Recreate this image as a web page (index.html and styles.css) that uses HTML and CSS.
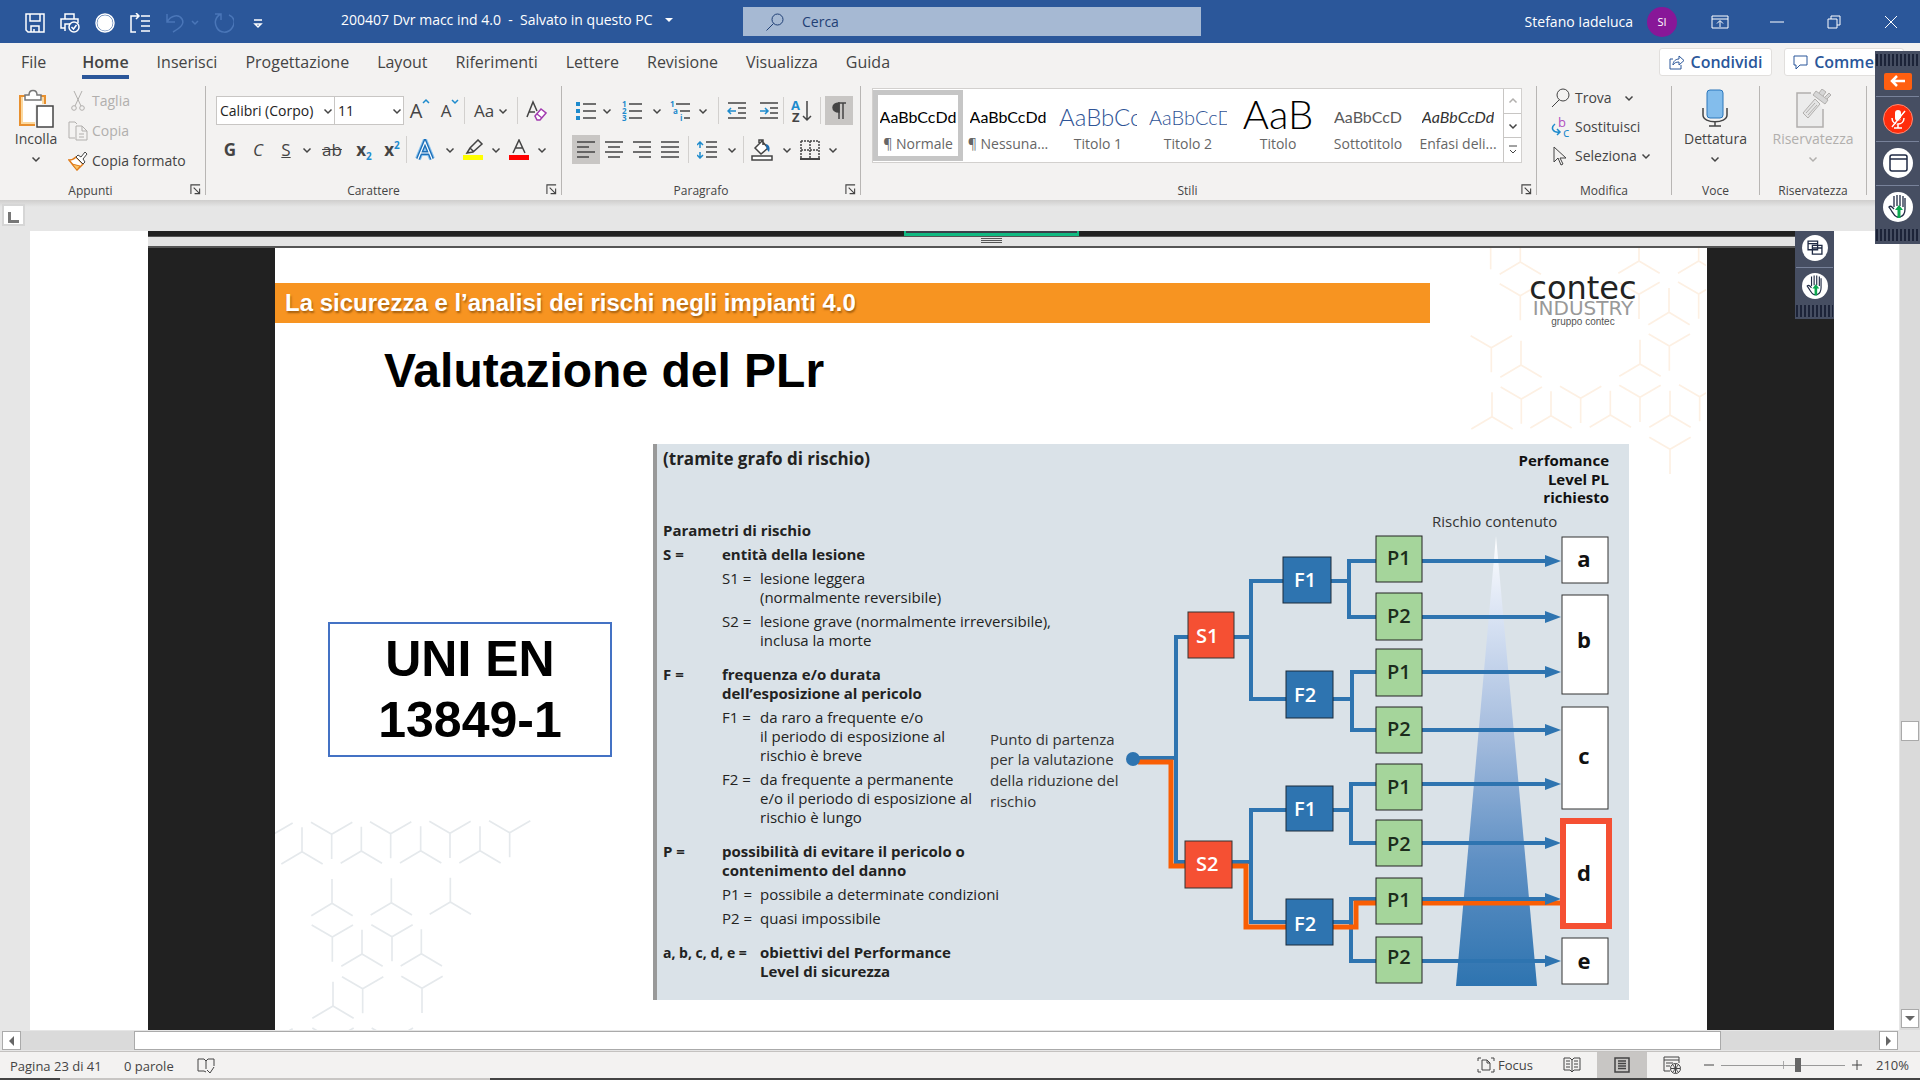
FILE: index.html
```html
<!DOCTYPE html>
<html lang="it">
<head>
<meta charset="utf-8">
<title>200407 Dvr macc ind 4.0</title>
<link rel="stylesheet" href="styles.css">
</head>
<body>
<svg class="sprite" aria-hidden="true">
  <symbol id="chev" viewBox="0 0 10 10"><path d="M1.500 3.500 5 7l3.500-3.500" fill="none" stroke="currentColor" stroke-width="1.500"/></symbol>
  <symbol id="launch" viewBox="0 0 12 12"><path d="M1 11V1h10M4 4l6 6M10.500 5v5.500H5" fill="none" stroke="currentColor" stroke-width="1.200"/></symbol>
  <symbol id="hand" viewBox="0 0 30 30"><circle cx="15" cy="15" r="15" fill="#fff"/><path d="M11 15V4M14 14V3M17 14V3M20 15V4M22 6v11c0 4-2 7-5 8h-3c-3-1-4-4-6-7l-2-3c1-1 2-1 3 0l2 2" fill="none" stroke="#1f2a44" stroke-width="1.300"/><path d="m16 13 4 5h-2.500v8h-3v-8H12z" fill="#0ba84e"/></symbol>
  <g id="pk"><path d="M0-73V0M-62 37 0 0 62 37"/></g>
  <g id="ve"><path d="M0 74V0M-62-36 0 0 62-36"/></g>
</svg>

<header class="titlebar">
  <div class="quick">
    <button aria-label="Salva"><svg width="20" height="20" viewBox="0 0 20 20"><path d="M1 1h18v18H3l-2-2zM5 1v7h10V1M6 19v-6h8v6M9 16v3"/></svg></button>
    <button aria-label="Stampa"><svg width="20" height="20" viewBox="0 0 20 20"><path d="M5 6V1h9v5M5 15H1V6h17v4M5 18V11h5"/><circle cx="14" cy="14" r="5"/><path d="m11.500 14 2 2 3-4"/></svg></button>
    <button aria-label="Registra"><svg width="20" height="20" viewBox="0 0 20 20"><circle cx="10" cy="10" r="9"/><circle cx="10" cy="10" r="7" fill="#fff"/></svg></button>
    <button aria-label="Spaziatura"><svg width="20" height="20" viewBox="0 0 20 20"><path d="M6 19H1V3h7M6 0l3 3-3 3M11 3h9M11 8h9M11 13h9M11 18h9"/></svg></button>
    <button class="dim" aria-label="Annulla"><svg width="34" height="20" viewBox="0 0 34 20"><path d="M2 1v8h8M2 9C6 2 14 1 17 6s-2 9-9 13M27 8l3 3 3-3"/></svg></button>
    <button class="dim" aria-label="Ripeti"><svg width="20" height="20" viewBox="0 0 20 20"><path d="M1 1h6v6M7 1C1 4 0 10 3 15s11 6 15 0 2-11-3-13"/></svg></button>
    <button aria-label="Personalizza"><svg width="10" height="20" viewBox="0 0 10 20"><path d="M1 7h8M2 11l3 3 3-3z"/></svg></button>
  </div>
  <div class="doctitle">200407 Dvr macc ind 4.0&nbsp; -&nbsp; Salvato in questo PC <i class="tri"></i></div>
  <label class="search"><svg width="18" height="18" viewBox="0 0 18 18"><circle cx="11.500" cy="6.500" r="5.500"/><path d="m7.500 10.500-7 7"/></svg><input type="text" placeholder="Cerca" aria-label="Cerca"></label>
  <div class="account"><span>Stefano Iadeluca</span><span class="avatar">SI</span></div>
  <div class="winbtns">
    <button aria-label="Opzioni barra"><svg width="18" height="14" viewBox="0 0 18 14"><path d="M1 1h16v12H1zM1 4h16M9 12V6M6 8.500l3-3 3 3"/></svg></button>
    <button aria-label="Riduci"><svg width="14" height="14" viewBox="0 0 14 14"><path d="M0 7h14"/></svg></button>
    <button aria-label="Ripristina"><svg width="14" height="14" viewBox="0 0 14 14"><path d="M1 4h9v9H1zM4 4V1h9v9h-3"/></svg></button>
    <button aria-label="Chiudi"><svg width="14" height="14" viewBox="0 0 14 14"><path d="m1 1 12 12M13 1 1 13"/></svg></button>
  </div>
</header>

<nav class="tabs">
  <a href="#">File</a><a href="#" class="on">Home</a><a href="#">Inserisci</a><a href="#">Progettazione</a><a href="#">Layout</a><a href="#">Riferimenti</a><a href="#">Lettere</a><a href="#">Revisione</a><a href="#">Visualizza</a><a href="#">Guida</a>
  <div class="share">
    <button class="condividi"><svg width="16" height="16" viewBox="0 0 16 16"><path d="M4 5H1v10h11v-4M4 11c0-4 3-6 6-6V2l5 4.500L10 11V8c-3 0-5 1-6 3z"/></svg>Condividi</button>
    <button class="commenti"><svg width="15" height="15" viewBox="0 0 15 15"><path d="M1 1h13v9H7l-4 4v-4H1z"/></svg>Commenti</button>
  </div>
</nav>

<section class="ribbon">
  <div class="group clip">
    <div class="body">
      <button class="big"><svg width="36" height="40" viewBox="0 0 36 40"><path d="M2 7h25v29H2z" fill="#fff" stroke="#e8902f" stroke-width="2"/><path d="M4 8v26h21V8" stroke="#fbd9a0" stroke-width="2"/><path d="M7 11V6h4c0-6 8-6 8 0h4v5z" fill="#fff" stroke="#777" stroke-width="1.500"/><path d="M17 15h18v24H17z" fill="#f3f2f1" stroke="none"/><path d="M19 17h16v21H19z" fill="#fff" stroke="#444" stroke-width="1.500"/></svg>Incolla<svg class="cv"><use href="#chev"/></svg></button>
      <div class="stack">
        <button class="off"><svg width="20" height="20" viewBox="0 0 20 20"><path d="M6 0l7 15M14 0 7 15"/><circle cx="6" cy="17" r="2.300"/><circle cx="14" cy="17" r="2.300"/></svg>Taglia</button>
        <button class="off"><svg width="20" height="20" viewBox="0 0 20 20"><path d="M7 17H1V1h6l2 2M8 5h6l5 5v9H8zM14 5v5h5M11 13h5M11 16h5"/></svg>Copia</button>
        <button><svg width="20" height="20" viewBox="0 0 20 20"><path d="M1 9c3 0 5-1 7-3l7 7c-2 2-4 4-6 6z" fill="#fff" stroke="#e07b1a" stroke-width="1.500"/><path d="m4 13 8 2-3 4z" fill="#fbc66a" stroke="#e07b1a"/><path d="m8 6 2-2 3 2 4-5 2 2-4 5 2 3-2 2z" fill="#fff"/></svg>Copia formato</button>
      </div>
    </div>
    <footer>Appunti<button aria-label="Apri Appunti"><svg><use href="#launch"/></svg></button></footer>
  </div>

  <div class="group font">
    <div class="body rows">
      <div class="row">
        <span class="combo c1"><select aria-label="Tipo di carattere"><option>Calibri (Corpo)</option></select><svg class="cv"><use href="#chev"/></svg></span><span class="combo c2"><select aria-label="Dimensione"><option>11</option></select><svg class="cv"><use href="#chev"/></svg></span>
        <button class="b32 cap">A<svg width="8" height="12" viewBox="0 0 8 12"><path d="m1 5 3-3 3 3" stroke="#1e8bcd" stroke-width="1.500"/></svg></button>
        <button class="b28 cap sm">A<svg width="8" height="12" viewBox="0 0 8 12"><path d="m1 2 3 3 3-3" stroke="#1e8bcd" stroke-width="1.500"/></svg></button>
        <i class="sep"></i>
        <button class="b52 aa">Aa<svg class="cv"><use href="#chev"/></svg></button>
        <i class="sep"></i>
        <button class="b36" aria-label="Cancella formattazione"><svg width="22" height="22" viewBox="0 0 22 22"><path d="M2 17 8 2l4 9M4 12h6"/><path d="m10 16 6-7 5 4-6 7h-3z" fill="#fff" stroke="#a33bb0" stroke-width="1.500"/><path d="m12 14 5 4" stroke="#a33bb0"/></svg></button>
      </div>
      <div class="row">
        <button class="b28"><b>G</b></button><button class="b28"><em>C</em></button><button class="b28"><u>S</u></button><button class="b14"><svg class="cv"><use href="#chev"/></svg></button>
        <button class="b36"><s>ab</s></button><button class="b28"><b>x<sub>2</sub></b></button><button class="b28"><b>x<sup>2</sup></b></button>
        <i class="sep"></i>
        <button class="b36" aria-label="Effetti testo"><svg width="22" height="22" viewBox="0 0 22 22"><path d="M4 20 11 3l7 17M7 14h8" stroke="#8cc4ef" stroke-width="6"/><path d="M4 20 11 3l7 17M7 14h8" stroke="#1d6fb8" stroke-width="4"/><path d="M4 20 11 3l7 17M7 14h8" stroke="#fff" stroke-width="1.200"/></svg></button><button class="b14"><svg class="cv"><use href="#chev"/></svg></button>
        <button class="b32" aria-label="Evidenziatore"><svg width="22" height="22" viewBox="0 0 22 22"><path d="M5 14 8 9l8-8 4 4-9 8zM8 9l4 4"/><path d="M1 16h20v5H1z" fill="#ff0" stroke="none"/></svg></button><button class="b14"><svg class="cv"><use href="#chev"/></svg></button>
        <button class="b32" aria-label="Colore carattere"><svg width="22" height="22" viewBox="0 0 22 22"><path d="M5 14 11 1l6 13M7 9h8"/><path d="M1 16h20v5H1z" fill="#f00" stroke="none"/></svg></button><button class="b14"><svg class="cv"><use href="#chev"/></svg></button>
      </div>
    </div>
    <footer>Carattere<button aria-label="Apri Carattere"><svg><use href="#launch"/></svg></button></footer>
  </div>

  <div class="group para">
    <div class="body rows">
      <div class="row">
        <button class="b28" aria-label="Elenco puntato"><svg width="20" height="20" viewBox="0 0 20 20"><path d="M0 1h4v4H0zM0 8h4v4H0zM0 15h4v4H0z" fill="#1e8bcd" stroke="none"/><path d="M7 3h13M7 10h13M7 17h13"/></svg></button><button class="b14"><svg class="cv"><use href="#chev"/></svg></button>
        <button class="b36" aria-label="Elenco numerato"><svg class="num" width="20" height="20" viewBox="0 0 20 20"><text x="0" y="6">1</text><text x="0" y="13">2</text><text x="0" y="20">3</text><path d="M7 3h13M7 10h13M7 17h13"/></svg></button><button class="b14"><svg class="cv"><use href="#chev"/></svg></button>
        <button class="b32" aria-label="Elenco a più livelli"><svg class="num" width="20" height="20" viewBox="0 0 20 20"><text x="0" y="6">1</text><text x="3" y="13">a</text><text x="10" y="20">i</text><path d="M6 3h14M10 10h10M14 17h6"/></svg></button><button class="b14"><svg class="cv"><use href="#chev"/></svg></button>
        <i class="sep l8"></i>
        <button class="b36" aria-label="Riduci rientro"><svg width="20" height="18" viewBox="0 0 20 18"><path d="M1 1h18M11 6h8M11 11h8M1 16h18"/><path d="M9 9H1M4 6 1 9l3 3" stroke="#1e8bcd" stroke-width="1.500"/></svg></button><button class="b28" aria-label="Aumenta rientro"><svg width="20" height="18" viewBox="0 0 20 18"><path d="M1 1h18M11 6h8M11 11h8M1 16h18"/><path d="M1 9h8M6 6l3 3-3 3" stroke="#1e8bcd" stroke-width="1.500"/></svg></button>
        <i class="sep"></i>
        <button class="b36" aria-label="Ordina"><svg class="sort" width="22" height="22" viewBox="0 0 22 22"><text x="0" y="10" class="bl">A</text><text x="1" y="22">Z</text><path d="M16 1v19M12 16l4 4 4-4"/></svg></button>
        <i class="sep"></i>
        <button class="b28 sel l4" aria-label="Mostra tutto"><svg width="14" height="18" viewBox="0 0 14 18"><path d="M7 17V1M11 17V1M14 1H6"/><path d="M7 1C-1 1-1 10 7 10z" fill="#444"/></svg></button>
      </div>
      <div class="row">
        <button class="b28 sel" aria-label="Allinea a sinistra"><svg width="20" height="18" viewBox="0 0 20 18"><path d="M1 1h18M1 6h12M1 11h18M1 16h12"/></svg></button><button class="b28" aria-label="Centra"><svg width="20" height="18" viewBox="0 0 20 18"><path d="M1 1h18M4 6h12M1 11h18M4 16h12"/></svg></button><button class="b28" aria-label="Allinea a destra"><svg width="20" height="18" viewBox="0 0 20 18"><path d="M1 1h18M7 6h12M1 11h18M7 16h12"/></svg></button><button class="b28" aria-label="Giustifica"><svg width="20" height="18" viewBox="0 0 20 18"><path d="M1 1h18M1 6h18M1 11h18M1 16h18"/></svg></button>
        <i class="sep l4"></i>
        <button class="b36" aria-label="Interlinea"><svg width="20" height="18" viewBox="0 0 20 18"><path d="M9 1h11M9 6h11M9 11h11M9 16h11"/><path d="M3 7V1M0 4l3-3 3 3M3 11v6M0 14l3 3 3-3" stroke="#1e8bcd" stroke-width="1.500"/></svg></button><button class="b14"><svg class="cv"><use href="#chev"/></svg></button>
        <i class="sep l4"></i>
        <button class="b36" aria-label="Sfondo"><svg width="22" height="22" viewBox="0 0 22 22"><path d="m4 9 7-7 6 7-7 6zM8 4V1h4v5" fill="#fff"/><path d="M15 5c4 1 4 5 3 8-2-2-3-4-3-8z" fill="#1e6cb0" stroke="none"/><path d="M1 17h20v4H1z" fill="#fff"/></svg></button><button class="b14"><svg class="cv"><use href="#chev"/></svg></button>
        <button class="b32" aria-label="Bordi"><svg width="20" height="20" viewBox="0 0 20 20"><path d="M1 1h18M1 10h18M1 1v17M10 1v17M19 1v17" stroke-dasharray="2 1"/><path d="M0 19h20" stroke-width="2"/></svg></button><button class="b14"><svg class="cv"><use href="#chev"/></svg></button>
      </div>
    </div>
    <footer>Paragrafo<button aria-label="Apri Paragrafo"><svg><use href="#launch"/></svg></button></footer>
  </div>

  <div class="group styles">
    <div class="body">
      <div class="gallery">
        <button class="style cur"><span class="smp">AaBbCcDd</span><span>¶ Normale</span></button>
        <button class="style"><span class="smp">AaBbCcDd</span><span>¶ Nessuna...</span></button>
        <button class="style"><span class="smp t1">AaBbCc</span><span>Titolo 1</span></button>
        <button class="style"><span class="smp t2">AaBbCcD</span><span>Titolo 2</span></button>
        <button class="style"><span class="smp t0">AaB</span><span>Titolo</span></button>
        <button class="style"><span class="smp st">AaBbCcD</span><span>Sottotitolo</span></button>
        <button class="style"><span class="smp en">AaBbCcDd</span><span>Enfasi deli...</span></button>
        <div class="spin"><button class="off" aria-label="Su"><svg class="cv up"><use href="#chev"/></svg></button><button aria-label="Giù"><svg class="cv"><use href="#chev"/></svg></button><button aria-label="Altro"><svg width="10" height="10" viewBox="0 0 10 10"><path d="M1 1h8M2 5l3 3 3-3"/></svg></button></div>
      </div>
    </div>
    <footer>Stili<button aria-label="Apri Stili"><svg><use href="#launch"/></svg></button></footer>
  </div>

  <div class="group modif">
    <div class="body">
      <div class="stack">
        <button><svg width="20" height="20" viewBox="0 0 20 20"><circle cx="12" cy="7" r="6"/><path d="m8 12-7 7"/></svg>Trova<svg class="cv gap"><use href="#chev"/></svg></button>
        <button><svg class="repl" width="20" height="20" viewBox="0 0 20 20"><text x="7" y="10" fill="#b14fc0">b</text><text x="12" y="20" fill="#1e8bcd">c</text><path d="M4 7c-5 4-2 9 5 8M6 12l3 3-3 3" stroke="#1e8bcd" stroke-width="1.500"/></svg>Sostituisci</button>
        <button><svg width="20" height="20" viewBox="0 0 20 20"><path d="M3 1v15l4-4 3 7 2-1-3-6h6z"/></svg>Seleziona<svg class="cv"><use href="#chev"/></svg></button>
      </div>
    </div>
    <footer>Modifica</footer>
  </div>
  <div class="group voce">
    <div class="body"><button class="big"><svg width="28" height="40" viewBox="0 0 28 40"><rect x="6" y="1" width="16" height="28" rx="3" fill="#83bdec" stroke="#2b76bb"/><path d="M2 19v7c0 9 24 9 24 0v-7M14 33v4M8 37h12" stroke-width="1.500"/></svg>Dettatura<svg class="cv"><use href="#chev"/></svg></button></div>
    <footer>Voce</footer>
  </div>
  <div class="group ris">
    <div class="body"><button class="big off"><svg width="36" height="40" viewBox="0 0 36 40"><path d="M16 4H2v34h26V20" fill="#ececec" stroke-width="1.500"/><path d="M8 24 20 10l5 5-12 14zM11 24l9-10M13 26l9-10" fill="#e4e4e4"/><path d="m18 6 3-4 12 9-3 4zM24 4l3-4 4 3-3 4M30 8l4-4 2 2-4 4" fill="#d6d6d6"/></svg>Riservatezza<svg class="cv"><use href="#chev"/></svg></button></div>
    <footer>Riservatezza</footer>
  </div>
</section>

<div class="ruler"><button aria-label="Tabulazione"></button></div>

<main class="work">
  <div class="view">
    <div class="picture">
      <div class="prev"><i></i></div>
      <div class="divider"><i></i></div>
      <article class="slide">
        <svg class="pattern" width="1431" height="782" viewBox="0 0 1431 782" fill="none" aria-hidden="true">
          <g transform="translate(1145 -18) scale(.33333)" stroke="#fdf0e3" stroke-width="5">
            <path d="M212 54v64"/>
            <use href="#pk" x="301" y="96"/><use href="#pk" x="657" y="93"/><use href="#pk" x="836" y="93"/><use href="#pk" x="747" y="247"/><use href="#pk" x="303" y="405"/><use href="#pk" x="660" y="402"/><use href="#pk" x="216" y="560"/><use href="#pk" x="393" y="557"/><use href="#pk" x="571" y="555"/><use href="#pk" x="750" y="555"/>
            <use href="#ve" x="301" y="197"/><use href="#ve" x="657" y="193"/><use href="#ve" x="836" y="192"/><use href="#ve" x="214" y="353"/><use href="#ve" x="748" y="348"/><use href="#ve" x="304" y="507"/><use href="#ve" x="482" y="505"/><use href="#ve" x="660" y="502"/><use href="#ve" x="839" y="500"/><use href="#ve" x="750" y="658"/>
          </g>
          <g transform="translate(-15 542) scale(.33333)" stroke="#e5e9ec" stroke-width="5">
            <use href="#ve" x="36" y="135"/><use href="#ve" x="215" y="133"/><use href="#ve" x="392" y="131"/><use href="#ve" x="570" y="130"/><use href="#ve" x="749" y="128"/><use href="#ve" x="217" y="441"/><use href="#ve" x="396" y="440"/><use href="#ve" x="308" y="596"/><use href="#ve" x="486" y="595"/><use href="#ve" x="36" y="752"/><use href="#ve" x="219" y="750"/><use href="#ve" x="397" y="750"/>
            <use href="#pk" x="126" y="185"/><use href="#pk" x="304" y="183"/><use href="#pk" x="482" y="182"/><use href="#pk" x="660" y="182"/><use href="#pk" x="216" y="340"/><use href="#pk" x="394" y="338"/><use href="#pk" x="571" y="336"/><use href="#pk" x="306" y="492"/><use href="#pk" x="484" y="491"/><use href="#pk" x="219" y="648"/>
          </g>
        </svg>
        <div class="banner">La sicurezza e l’analisi dei rischi negli impianti 4.0</div>
        <div class="logo"><span class="l1">contec</span><span class="l2">INDUSTRY</span><span class="l3">gruppo contec</span></div>
        <h1>Valutazione del PLr</h1>
        <div class="content">
          <div class="norm">UNI EN<br>13849-1</div>
          <div class="panel">
            <div class="params">
              <h2>(tramite grafo di rischio)</h2>
              <h3>Parametri di rischio</h3>
              <dl><dt>S =</dt><dd><b>entità della lesione</b></dd></dl>
              <dl class="sub"><dt>S1 =</dt><dd>lesione leggera<br>(normalmente reversibile)</dd></dl>
              <dl class="sub"><dt>S2 =</dt><dd>lesione grave (normalmente irreversibile),<br>inclusa la morte</dd></dl>
              <dl class="top"><dt>F =</dt><dd><b>frequenza e/o durata<br>dell’esposizione al pericolo</b></dd></dl>
              <dl class="sub"><dt>F1 =</dt><dd>da raro a frequente e/o<br>il periodo di esposizione al<br>rischio è breve</dd></dl>
              <dl class="sub"><dt>F2 =</dt><dd>da frequente a permanente<br>e/o il periodo di esposizione al<br>rischio è lungo</dd></dl>
              <dl class="top"><dt>P =</dt><dd><b>possibilità di evitare il pericolo o<br>contenimento del danno</b></dd></dl>
              <dl class="sub"><dt>P1 =</dt><dd>possibile a determinate condizioni</dd></dl>
              <dl class="sub"><dt>P2 =</dt><dd>quasi impossibile</dd></dl>
              <dl class="top obj"><dt>a, b, c, d, e =</dt><dd><b>obiettivi del Performance<br>Level di sicurezza</b></dd></dl>
            </div>
            <svg class="graph" width="976" height="556" viewBox="0 0 976 556">
              <defs>
                <linearGradient id="cone" x1="0" y1="0" x2="0" y2="1"><stop offset="0" stop-color="#fff"/><stop offset=".2" stop-color="#d5e0f2"/><stop offset=".45" stop-color="#a3bbdd"/><stop offset=".72" stop-color="#5f90c4"/><stop offset="1" stop-color="#2e74b0"/></linearGradient>
                <g id="ar"><path d="M769 0h130" /><path d="M892-6 908 0 892 6z" fill="#2e74b0" stroke="none"/></g>
              </defs>
              <path d="M843 92 884 542H803z" fill="url(#cone)"/>
              <g fill="none" stroke="#2e74b0" stroke-width="4">
                <path d="M480 314h43M535 193h-12v225h10M581 193h17M630 137h-32v118h35M678 137h18M723 117h-27v56h27M680 255h19M723 228h-24v58h24M579 418h19M633 366h-35v112h35M680 366h18M723 340h-25v59h25M680 478h18M723 455h-25v62h25"/>
                <use href="#ar" y="117"/><use href="#ar" y="173"/><use href="#ar" y="228"/><use href="#ar" y="286"/><use href="#ar" y="340"/><use href="#ar" y="399"/><use href="#ar" y="517"/>
              </g>
              <path d="M485 318h33v104h16M579 422h14v61h40M680 483h23v-24h20M769 459h140" fill="none" stroke="#f95e04" stroke-width="5"/>
              <g fill="none" stroke="#2e74b0" stroke-width="4"><use href="#ar" y="455"/></g>
              <circle cx="480" cy="315" r="7" fill="#2e74b0"/>
              <g class="s"><rect x="535" y="168" width="46" height="46"/><rect x="532" y="397" width="47" height="47"/></g>
              <g class="f"><rect x="630" y="113" width="48" height="46"/><rect x="633" y="227" width="47" height="47"/><rect x="633" y="342" width="47" height="45"/><rect x="633" y="455" width="47" height="46"/></g>
              <g class="p"><rect x="723" y="92" width="46" height="46"/><rect x="723" y="149" width="46" height="47"/><rect x="723" y="205" width="46" height="47"/><rect x="723" y="263" width="46" height="46"/><rect x="723" y="320" width="46" height="46"/><rect x="723" y="376" width="46" height="46"/><rect x="723" y="434" width="46" height="46"/><rect x="723" y="493" width="46" height="46"/></g>
              <g class="r"><rect x="909" y="93" width="46" height="46"/><rect x="909" y="151" width="46" height="99"/><rect x="909" y="263" width="46" height="102"/><rect x="910" y="377" width="46" height="105" class="hit"/><rect x="909" y="494" width="46" height="46"/></g>
              <g class="wl"><text x="543" y="199">S1</text><text x="543" y="427">S2</text><text x="641" y="143">F1</text><text x="641" y="258">F2</text><text x="641" y="372">F1</text><text x="641" y="487">F2</text></g>
              <g class="gl"><text x="734" y="121">P1</text><text x="734" y="179">P2</text><text x="734" y="235">P1</text><text x="734" y="292">P2</text><text x="734" y="350">P1</text><text x="734" y="407">P2</text><text x="734" y="463">P1</text><text x="734" y="520">P2</text></g>
              <g class="rl"><text x="931" y="123">a</text><text x="931" y="204">b</text><text x="931" y="320">c</text><text x="931" y="437">d</text><text x="931" y="525">e</text></g>
              <g class="note"><text x="337" y="301">Punto di partenza</text><text x="337" y="321">per la valutazione</text><text x="337" y="342">della riduzione del</text><text x="337" y="363">rischio</text><text x="779" y="83">Rischio contenuto</text></g>
              <g class="head"><text x="956" y="22">Perfomance</text><text x="956" y="41">Level PL</text><text x="956" y="59">richiesto</text></g>
            </svg>
          </div>
        </div>
      </article>
      <aside class="dock inner"><svg width="26" height="26" viewBox="0 0 30 30"><circle cx="15" cy="15" r="15" fill="#fff"/><path d="M7 7h11v10H7zM7 10h11M12 12h11v10H12zM12 15h11" fill="#fff" stroke="#1f2a44" stroke-width="1.500"/></svg><hr><svg width="26" height="26"><use href="#hand"/></svg><i class="bars"></i></aside>
    </div>
  </div>
  <div class="vscroll"><i class="thumb"></i><button aria-label="Scorri giù"><i class="dn"></i></button></div>
</main>

<div class="hscroll"><button aria-label="Scorri a sinistra"><i class="lf"></i></button><div class="track"><i></i></div><button aria-label="Scorri a destra"><i class="rt"></i></button></div>

<footer class="status">
  <span class="pg">Pagina 23 di 41</span><span class="wd">0 parole</span>
  <button aria-label="Controllo ortografia"><svg width="18" height="18" viewBox="0 0 18 18"><path d="M9 15 7 14H1V2h6l2 2 2-2h6v7M9 4v8M10 13l3 3 4-6"/></svg></button>
  <div class="right">
    <button class="focus"><svg width="18" height="16" viewBox="0 0 18 16"><path d="M4 1H1v3M1 12v3h3M14 1h3v3M17 12v3h-3M5 3h5l3 3v7H5zM10 3v3h3"/></svg>Focus</button>
    <button class="vw" aria-label="Lettura"><svg width="18" height="16" viewBox="0 0 18 16"><path d="M9 15 7 13H1V1h6l2 2 2-2h6v12h-6zM9 3v12M3 4h4M3 7h4M3 10h4M11 4h4M11 7h4M11 10h4"/></svg></button>
    <button class="vw sel" aria-label="Layout di stampa"><svg width="16" height="16" viewBox="0 0 16 16"><path d="M1 1h14v14H1zM4 4h8M4 6.500h8M4 9h8M4 11.500h8" stroke-width="1.500"/></svg></button>
    <button class="vw" aria-label="Layout Web"><svg width="18" height="18" viewBox="0 0 18 18"><path d="M7 15H1V1h15v6M1 4h15M3 7h7M3 10h4"/><circle cx="12.500" cy="12.500" r="5"/><path d="M8 12.500h9M12.500 8v9M10 9c2 2 2 5 0 7M15 9c-2 2-2 5 0 7"/></svg></button>
    <button class="pm" aria-label="Zoom indietro"><svg width="10" height="10" viewBox="0 0 10 10"><path d="M0 5h10"/></svg></button>
    <span class="zoom"><input type="range" min="0" max="100" value="63" aria-label="Zoom"></span>
    <button class="pm" aria-label="Zoom avanti"><svg width="10" height="10" viewBox="0 0 10 10"><path d="M0 5h10M5 0v10"/></svg></button>
    <span class="pct">210%</span>
  </div>
</footer>
<div class="edge"></div>

<aside class="dock outer"><i class="bars"></i><button aria-label="Indietro"><svg width="16" height="12" viewBox="0 0 16 12"><path d="M15 6H2M7 1 2 6l5 5" stroke="#fff" stroke-width="2.500" fill="none"/></svg></button><hr>
  <svg width="30" height="30" viewBox="0 0 30 30"><circle cx="15" cy="15" r="14.500" fill="#ff2d0c" stroke="#ff8a73"/><rect x="12" y="6" width="6" height="11" rx="3" fill="#fff"/><path d="M9 14c0 8 12 8 12 0M15 20v4M11 24h8M9 23 22 7" fill="none" stroke="#fff" stroke-width="1.500"/><path d="M10 24 23 8" stroke="#ff2d0c"/></svg><hr>
  <svg width="30" height="30" viewBox="0 0 30 30"><circle cx="15" cy="15" r="15" fill="#fff"/><rect x="7" y="7" width="17" height="16" rx="2" fill="none" stroke="#1f2a44" stroke-width="1.500"/><path d="M7 11h17" stroke="#1f2a44" stroke-width="1.500"/></svg><hr>
  <svg width="30" height="30"><use href="#hand"/></svg><i class="bars"></i></aside>
</body>
</html>
```
FILE: styles.css
```css
* { box-sizing: border-box; }
body {
  margin: 0; height: 100vh; display: flex; flex-direction: column; overflow: hidden;
  font: 14px/20px "Open Sans", "Noto Sans", sans-serif; color: #444; background: #f3f2f1;
}
button { font: inherit; color: inherit; background: none; border: 0; padding: 0; display: flex; align-items: center; justify-content: center; }
button svg, .search svg { fill: none; stroke: currentColor; flex: none; }
a { color: inherit; text-decoration: none; }
.sprite { position: absolute; width: 0; height: 0; }
.cv { width: 10px; height: 10px; }

/* title bar */
.titlebar { flex: none; height: 43px; background: #2b579a; color: #fff; display: flex; align-items: center; position: relative; }
.quick { display: flex; gap: 15px; margin-left: 25px; width: 316px; padding-top: 3px; }
.quick svg { stroke-width: 1.5; }
.quick .dim { color: #4a76b8; }
.quick button:last-child { margin-left: 4px; }
.doctitle { width: 402px; font-size: 14px; padding-bottom: 3px; white-space: nowrap; display: flex; align-items: center; }
.tri { border: 4px solid transparent; border-top-color: #fff; margin: 4px 0 0 12px; }
.search { flex: 0 1 458px; height: 29px; background: #a6b9d3; color: #1f3f75; display: flex; align-items: center; padding-left: 23px; gap: 18px; }
.search input { flex: 1; min-width: 0; border: 0; background: none; font: inherit; padding: 0; }
.search input::placeholder { color: #1f3f75; opacity: 1; }
.account { margin-left: auto; display: flex; align-items: center; gap: 14px; white-space: nowrap; }
.avatar { width: 30px; height: 30px; border-radius: 50%; background: #881798; font-size: 11px; line-height: 30px; text-align: center; }
.winbtns { display: flex; margin-left: 14px; padding-right: 1px; }
.winbtns button { width: 57px; height: 43px; }

/* tabs */
.tabs { flex: none; height: 37px; display: flex; padding-left: 21px; gap: 28px; font-size: 16px; line-height: 38px; }
.tabs .on { font-weight: 600; box-shadow: inset 0 -4px #2b579a; height: 36px; margin-left: 8px; }
.share { margin-left: auto; display: flex; gap: 12px; padding: 5px 16px 0 0; }
.share button { height: 28px; background: #fff; border: 1px solid #e1dfdd; border-radius: 3px; color: #2b579a; font-weight: 600; line-height: 20px; gap: 6px; }
.condividi { width: 113px; }
.commenti { width: 120px; }

/* ribbon */
.ribbon { flex: none; height: 120px; display: flex; padding: 6px 53px 0 0; }
.group { height: 109px; border-right: 1px solid #b8b6b4; display: flex; flex-direction: column; position: relative; }
.group footer { margin-top: auto; text-align: center; font-size: 12px; line-height: 9px; position: relative; }
.group footer button { position: absolute; right: 4px; bottom: 0; }
.group footer svg { width: 11px; height: 11px; }
.clip { width: 206px; }
.clip footer { padding-right: 24px; }
.font { width: 356px; }
.font footer { padding-right: 20px; }
.para { width: 299px; }
.para footer { padding-right: 20px; }
.styles { flex: 1; min-width: 0; }
.styles footer { padding-right: 22px; }
.modif { width: 135px; }
.voce { width: 88px; }
.ris { width: 107px; }
.clip .body, .modif .body, .voce .body, .ris .body { display: flex; }
.clip .body { padding-left: 10px; gap: 6px; }
.modif .body { padding-left: 14px; }
.voce .body, .ris .body { justify-content: center; }
.big { flex-direction: column; height: 80px; }
.big .cv { margin-top: 5px; }
.clip .big { width: 52px; }
.stack { display: flex; flex-direction: column; gap: 9px; padding-top: 2px; }
.clip .stack { gap: 10px; padding-top: 5px; }
.stack button { justify-content: flex-start; gap: 4px; height: 20px; white-space: nowrap; }
.stack .gap { margin-left: 8px; }
.off { color: #b1afad; }
.rows { padding: 10px 0 0 10px; display: flex; flex-direction: column; gap: 10px; }
.row { display: flex; height: 29px; }
.row button { height: 29px; font-size: 17px; }
.row svg { stroke-width: 1.5; }
.b14 { width: 14px; } .b28 { width: 28px; } .b32 { width: 32px; } .b36 { width: 36px; } .b52 { width: 52px; }
.sep { width: 1px; height: 27px; background: #d2d0ce; margin-top: 1px; }
.l4 { margin-left: 4px; } .l8 { margin-left: 8px; }
.sel { background: #c8c6c4; }
.row .cap { font-size: 20px; align-items: flex-start; line-height: 29px; }
.row .cap svg { margin-top: 2px; }
.row .sm { font-size: 17px; }
.row .aa { gap: 4px; }
.row sub, .row sup { font-size: 10px; color: #1e8bcd; line-height: 0; }
.combo { position: relative; height: 29px; display: flex; }
.combo .cv { position: absolute; right: 2px; top: 10px; pointer-events: none; }
.combo select { appearance: none; width: 100%; border: 1px solid #c8c6c4; border-radius: 0; background: #fff; font: 14px/20px "Open Sans", sans-serif; color: #222; padding: 0 0 0 3px; }
.c1 { width: 119px; } .c2 { width: 70px; margin-left: -1px; }
.num text { font: bold 8px/1 "Open Sans", sans-serif; fill: #1e8bcd; stroke: none; }
.sort text { font: bold 13px/1 "Open Sans", sans-serif; fill: #444; stroke: none; }
.sort .bl { fill: #1e8bcd; }
.repl text { font: 13px/1 "Open Sans", sans-serif; stroke: none; }

.styles .body { padding: 2px 14px 0 11px; }
.gallery { height: 75px; background: #fff; border: 1px solid #d2d0ce; display: flex; }
.style { flex: 1; min-width: 0; flex-direction: column; overflow: hidden; color: #666; margin: 1px 0; white-space: nowrap; }
.cur { box-shadow: inset 0 0 0 5px #c6c6c6; }
.smp { height: 36px; color: #000; font: 16px/38px Lato, sans-serif; overflow: hidden; max-width: 78px; }
.style .t1 { font-size: 24px; color: #2f5496; font-weight: 300; }
.style .t2 { font-size: 20px; color: #2f5496; font-weight: 300; }
.style .t0 { font-size: 40px; font-weight: 300; line-height: 32px; }
.style .st { color: #5a5a5a; }
.style .en { font-style: italic; color: #333; }
.spin { width: 18px; display: flex; flex-direction: column; border-left: 1px solid #c8c6c4; }
.spin button { flex: 1; border-bottom: 1px solid #c8c6c4; }
.spin button:last-child { border-bottom: 0; }
.up { transform: rotate(180deg); }

/* ruler and document */
.ruler { flex: none; height: 31px; background: linear-gradient(#cfcecd, #e6e6e6 7px); padding: 4px 2px; }
.ruler button { width: 23px; height: 22px; background: #fff; border: 2px solid #d6d6d6; }
.ruler button::before { content: ""; width: 8px; height: 8px; border: solid #777; border-width: 0 0 3px 3px; margin-top: 4px; }
.work { flex: 1; min-height: 0; display: flex; background: #e6e6e6; padding-left: 30px; }
.view { flex: 1; min-width: 0; background: #fff; overflow: hidden; }
.picture { margin: 0 65px 0 118px; background: #212121; position: relative; min-height: 100%; }
.prev { height: 5px; }
.prev i { display: block; width: 175px; height: 5px; margin: 0 auto; border: solid #10b981; border-width: 0 2px 3px; background: #3b3f4a; }
.divider { height: 12px; background: #e4e4e4; border: solid #555; border-width: 1px 0 2px; padding-top: 1px; }
.divider i { display: block; width: 21px; height: 6px; margin: 0 auto; background: repeating-linear-gradient(#555 0 1px, transparent 1px 2px); }
.slide { margin: 0 127px; background: #fff; height: 782px; padding-top: 35px; position: relative; overflow: hidden; color: #000; }
.pattern { position: absolute; left: 0; top: 0; }
.banner { position: relative; width: 1155px; height: 40px; background: #f79421; color: #fff; font: bold 24px/40px "Liberation Sans", Arial, sans-serif; padding-left: 10px; text-shadow: 1px 2px 2px rgba(110, 60, 0, .6); }
.logo { position: absolute; right: 65px; top: 28px; width: 118px; display: flex; flex-direction: column; align-items: center; }
.logo .l1 { font: 32px/24px "DejaVu Sans", sans-serif; color: #222; }
.logo .l2 { font: 20px/16px "DejaVu Sans", sans-serif; color: #999; }
.logo .l3 { font: 10px/12px "Liberation Sans", sans-serif; color: #555; }
.slide h1 { position: relative; margin: 20px 0 0 109px; font: bold 48px/56px "Liberation Sans", Arial, sans-serif; }
.content { position: relative; display: flex; gap: 41px; margin: 45px 0 0 53px; align-items: flex-start; }
.norm { flex: none; width: 284px; height: 135px; margin-top: 178px; border: 2px solid #4472c4; background: #fff; text-align: center; font: bold 50px/61px "Liberation Sans", Arial, sans-serif; padding-top: 5px; }
.panel { flex: none; width: 976px; height: 556px; position: relative; background: #dae2e8; border-left: 4px solid #999; }
.params { padding: 5px 0 0 6px; font-size: 15px; line-height: 19px; color: #222; }
.params h2 { margin: 0; font-size: 17px; line-height: 20px; }
.params h3 { margin: 52px 0 5px; font-size: 15px; line-height: 19px; }
.params dl { margin: 0; display: grid; grid-template-columns: 59px 1fr; }
.params dt { font-weight: bold; }
.params dd { margin: 0; }
.params .sub { margin: 5px 0 0 59px; grid-template-columns: 38px 1fr; }
.params .sub dt { font-weight: normal; }
.params .top { margin-top: 15px; }
.params .obj { grid-template-columns: 97px 1fr; white-space: nowrap; }
.params .obj dt { font-size: 14px; }
.graph { position: absolute; left: -4px; top: 0; font-family: "Open Sans", "Noto Sans", sans-serif; }
.s rect { fill: #f55033; stroke: #333; stroke-width: 1; }
.f rect { fill: #2e74b0; stroke: #1a2a3a; stroke-width: 1; }
.p rect { fill: #a5d59b; stroke: #222; stroke-width: 1; }
.r rect { fill: #fff; stroke: #333; stroke-width: 1; }
.r .hit { stroke: #f55033; stroke-width: 6; }
.wl { fill: #fff; font-size: 20px; font-weight: 600; }
.gl { fill: #1c2c1c; font-size: 20px; font-weight: 600; }
.rl { fill: #111; font-size: 22px; font-weight: bold; text-anchor: middle; }
.note { fill: #333; font-size: 15px; }
.head { fill: #111; font-size: 15px; font-weight: bold; text-anchor: end; }

/* scroll bars */
.vscroll { flex: none; width: 21px; background: #dadada; border-left: 1px solid #e6e6e6; padding: 0 1px 2px; display: flex; flex-direction: column; justify-content: space-between; }
.vscroll .thumb { height: 20px; margin-top: 490px; background: #fff; border: 1px solid #aaa; }
.vscroll button { height: 19px; background: #fff; border: 1px solid #aaa; }
.hscroll { flex: none; height: 21px; padding: 1px 22px 1px 2px; display: flex; background: #e6e6e6; }
.hscroll button { width: 19px; background: #fff; border: 1px solid #aaa; }
.track { flex: 1; background: #dadada; padding: 0 158px 0 113px; }
.track i { display: block; height: 19px; background: #fff; border: 1px solid #aaa; }
.lf, .rt, .dn { border: 5px solid transparent; }
.lf { border-right-color: #666; margin-left: -5px; }
.rt { border-left-color: #666; margin-right: -5px; }
.dn { border-top-color: #666; margin-bottom: -5px; }

/* status bar */
.status { flex: none; height: 27px; border-top: 1px solid #c4c2c0; display: flex; align-items: center; padding: 2px 11px 0 10px; font-size: 13px; white-space: nowrap; }
.pg { width: 114px; } .wd { width: 73px; }
.right { margin: -2px 0 0 auto; height: 26px; display: flex; align-items: center; }
.focus { gap: 3px; margin-right: 14px; }
.vw { width: 50px; height: 26px; }
.pm { width: 24px; height: 26px; }
.zoom { width: 124px; height: 26px; display: flex; align-items: center; background: linear-gradient(#aaa, #aaa) 50% 50% / 1px 8px no-repeat; }
.zoom input { appearance: none; width: 100%; margin: 0; height: 1px; background: #999; }
.zoom input::-webkit-slider-thumb { appearance: none; width: 6px; height: 14px; background: #666; border-radius: 0; }
.pct { width: 40px; text-align: right; }
.edge { flex: none; height: 2px; background: linear-gradient(90deg, #444 60px, #c8c6c4 60px 490px, #444 490px); }

/* floating control docks */
.dock { position: absolute; background: #464e62; display: flex; flex-direction: column; align-items: center; }
.dock hr { width: 100%; height: 1px; margin: 0; border: 0; background: #78829a; }
.bars { width: 100%; background: repeating-linear-gradient(90deg, #1c2338 0 2px, #464e62 2px 4px); }
.outer { right: 0; top: 51px; width: 45px; height: 193px; padding: 3px 1px; justify-content: space-between; }
.outer .bars { height: 12px; }
.outer button { width: 28px; height: 17px; background: #ff5f10; border-radius: 2px; }
.inner { right: 0; top: 0; width: 39px; height: 88px; padding: 4px 1px 2px; justify-content: space-between; }
.inner .bars { height: 12px; }
```
